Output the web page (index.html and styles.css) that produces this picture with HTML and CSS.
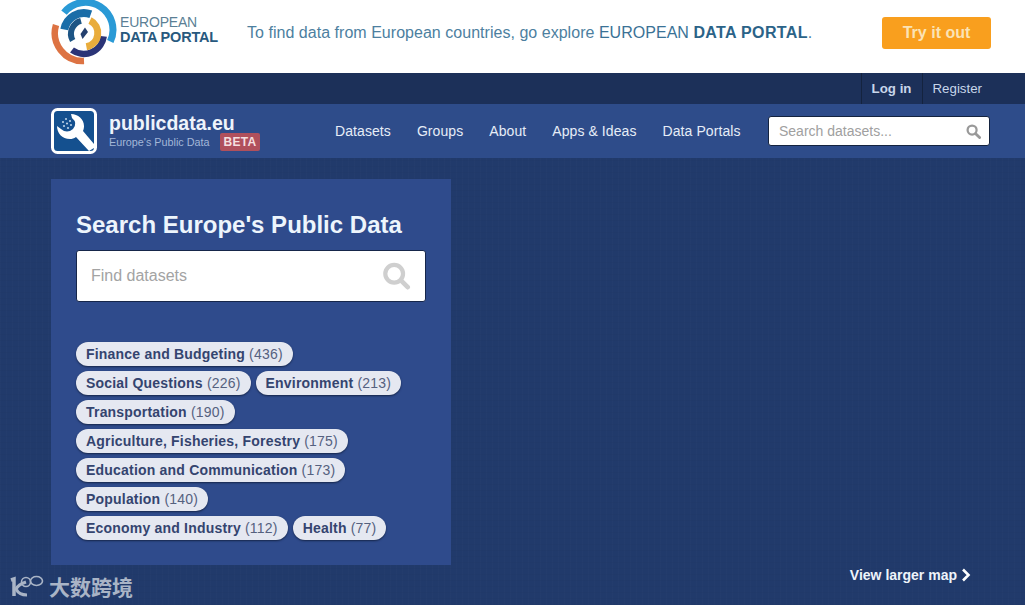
FILE: index.html
```html
<!DOCTYPE html>
<html lang="en">
<head>
    <meta charset="UTF-8">
    <meta name="viewport" content="width=device-width, initial-scale=1.0">
    <title>publicdata.eu</title>
    <link rel="stylesheet" href="styles.css">
</head>
<body>
    <!-- Promo banner -->
    <div class="promo">
        <a class="promo-logo" href="#">
            <svg class="promo-mark" viewBox="0 0 66 66" width="66" height="66" fill="none">
                <path d="M13 12.6A27.5 27.5 0 0 1 59.3 41.6" stroke="#2a9ad6" stroke-width="7"/>
                <path d="M5 25A28 28 0 0 0 33 61" stroke="#dd7343" stroke-width="6.5"/>
                <path d="M21 50A20 20 0 0 0 52.7 36.3" stroke="#2b3477" stroke-width="6.5"/>
                <path d="M39 20.5A14 14 0 0 1 35.4 46.8" stroke="#e9ac3c" stroke-width="7"/>
                <path d="M13.3 29.5A20 20 0 0 1 39.8 14.2" stroke="#1a6da8" stroke-width="8"/>
                <path d="M21.7 40.5A13.5 13.5 0 0 1 30 20.8" stroke="#1d5585" stroke-width="6"/>
                <path d="M34 27.5L37 32L31.5 39L29.5 34Z" fill="#24406f"/>
            </svg>
            <span class="promo-name">EUROPEAN<strong>DATA PORTAL</strong></span>
        </a>
        <p class="promo-text">To find data from European countries, go explore <span class="promo-accent">EUROPEAN <strong>DATA PORTAL</strong></span>.</p>
        <a class="promo-btn" href="#">Try it out</a>
    </div>

    <!-- Account links -->
    <div class="account">
        <a class="account-link account-login" href="#">Log in</a>
        <a class="account-link" href="#">Register</a>
    </div>

    <!-- Main nav -->
    <header class="masthead">
        <a class="brand" href="#">
            <svg class="brand-icon" viewBox="0 0 46 46" width="46" height="46">
                <rect x="1.5" y="1.5" width="43" height="43" rx="5" fill="#14508f" stroke="#fff" stroke-width="3"/>
                <path d="M20 6C27 6 33 11 33 18C33 20 32.7 21 32 23L43 36V40L38 43L25 29C23 30.5 21 31 19 31C11 31 6 25 6 18L10 21Q16 26 22 21Q27 15 21 10Z" fill="#fff"/>
                <g fill="#b9d0e6">
                    <circle cx="15" cy="11" r="1.1"/>
                    <circle cx="19" cy="13" r="1.1"/>
                    <circle cx="12" cy="14" r="1.1"/>
                    <circle cx="16" cy="15.5" r="1.1"/>
                    <circle cx="20" cy="17" r="1.1"/>
                    <circle cx="13" cy="18" r="1.1"/>
                    <circle cx="17" cy="20" r="1.1"/>
                </g>
            </svg>
            <span class="brand-text">
                <span class="brand-name">publicdata.eu</span>
                <span class="brand-sub">Europe's Public Data <span class="badge">BETA</span></span>
            </span>
        </a>
        <nav class="nav">
            <a href="#">Datasets</a>
            <a href="#">Groups</a>
            <a href="#">About</a>
            <a href="#">Apps &amp; Ideas</a>
            <a href="#">Data Portals</a>
        </nav>
        <form class="nav-search">
            <input type="text" placeholder="Search datasets...">
            <svg viewBox="0 0 16 16" width="15" height="15" fill="none" stroke="#999">
                <circle cx="6.5" cy="6.5" r="4.8" stroke-width="2.4"/>
                <path d="M10.3 10.3L14.5 14.5" stroke-width="3" stroke-linecap="round"/>
            </svg>
        </form>
    </header>

    <main class="content">
        <section class="panel">
            <h1>Search Europe's Public Data</h1>
            <form class="big-search">
                <input type="text" placeholder="Find datasets">
                <svg viewBox="0 0 30 30" width="29" height="28" fill="none" stroke="#cfcfcf">
                    <circle cx="12.5" cy="12.5" r="9.5" stroke-width="4.5"/>
                    <path d="M20 20L27 27" stroke-width="5" stroke-linecap="round"/>
                </svg>
            </form>
            <ul class="tags">
                <li><a href="#">Finance and Budgeting</a> (436)</li>
                <li><a href="#">Social Questions</a> (226)</li>
                <li><a href="#">Environment</a> (213)</li>
                <li><a href="#">Transportation</a> (190)</li>
                <li><a href="#">Agriculture, Fisheries, Forestry</a> (175)</li>
                <li><a href="#">Education and Communication</a> (173)</li>
                <li><a href="#">Population</a> (140)</li>
                <li><a href="#">Economy and Industry</a> (112)</li>
                <li><a href="#">Health</a> (77)</li>
            </ul>
        </section>
        <div class="map">
            <a class="map-link" href="#">View larger map
                <svg viewBox="0 0 10 14" width="10" height="14" fill="none" stroke="#fff" stroke-width="2.6">
                    <path d="M2 1.5L7.5 7L2 12.5"/>
                </svg>
            </a>
        </div>
    </main>

    <!-- Watermark over the page -->
    <div class="watermark">
        <svg viewBox="0 0 38 24" width="38" height="24" fill="none" stroke="#a9b4c6">
            <path d="M2 6L5 5V22" stroke-width="3.5"/>
            <path d="M17 8C11 10 8 13 7 15C9 19 13 21 18 21" stroke-width="3"/>
            <circle cx="17" cy="8" r="4.5" stroke-width="1.6"/>
            <ellipse cx="27.5" cy="7" rx="6" ry="4.5" stroke-width="1.6"/>
        </svg>
        <span>大数跨境</span>
    </div>
</body>
</html>
```

FILE: styles.css
```css
/* Basic Styling */
* {
    box-sizing: border-box;
}

html, body {
    height: 100%;
}

body {
    position: relative;
    margin: 0;
    overflow: hidden;
    font-family: "Liberation Sans", Arial, sans-serif;
    color: #fff;
    background-color: #213a6b;
    background-image:
        repeating-linear-gradient(90deg, rgba(255, 255, 255, 0.012) 0 1px, transparent 1px 6px),
        repeating-linear-gradient(0deg, rgba(0, 0, 0, 0.02) 0 1px, transparent 1px 6px);
}

a {
    color: inherit;
    text-decoration: none;
}

/* Promo banner */
.promo {
    display: flex;
    align-items: center;
    height: 73px;
    padding: 0 34px 7px 51px;
    background-color: #fff;
}

.promo-logo {
    display: flex;
    align-items: center;
    width: 196px;
    color: #5b7f95;
}

.promo-mark {
    flex: none;
    margin-right: 3px;
}

.promo-name {
    display: block;
    margin-bottom: 7px;
    font-size: 14px;
    line-height: 15px;
    letter-spacing: -0.2px;
}

.promo-name strong {
    display: block;
    font-size: 14.5px;
    color: #28597e;
}

.promo-text {
    flex: 1;
    margin: 0;
    font-size: 16px;
    letter-spacing: 0.03px;
    color: #4d7f9f;
}

.promo-accent {
    color: #3a7296;
}

.promo-accent strong {
    letter-spacing: 0.35px;
    color: #2b6388;
}

.promo-btn {
    width: 109px;
    height: 32px;
    border-radius: 3px;
    background-color: #f99f1e;
    color: #fbe3b5;
    font-size: 16px;
    font-weight: bold;
    line-height: 32px;
    text-align: center;
}

/* Account links */
.account {
    display: flex;
    justify-content: flex-end;
    height: 31px;
    padding-right: 32px;
    background-color: #1c3059;
}

.account-link {
    padding: 0 11px 0 9px;
    border-left: 1px solid #14233f;
    color: #c8d6ea;
    font-size: 13.3px;
    line-height: 31px;
}

.account-login {
    padding-left: 10px;
    font-weight: bold;
}

/* Main nav */
.masthead {
    display: flex;
    align-items: center;
    height: 54px;
    padding: 0 35px 0 51px;
    background-color: #2e4c8a;
}

.brand {
    display: flex;
    align-items: center;
    width: 284px;
}

.brand-icon {
    flex: none;
    margin-right: 12px;
}

.brand-text {
    display: block;
    padding-top: 2px;
}

.brand-name {
    display: block;
    font-size: 19.5px;
    font-weight: bold;
    line-height: 20px;
    color: #eef4fb;
}

.brand-sub {
    display: block;
    font-size: 10.8px;
    line-height: 18px;
    color: #a3b7d8;
}

.badge {
    display: inline-block;
    margin-left: 7px;
    padding: 0 4px;
    border-radius: 2px;
    background-color: #b0505c;
    color: #f5dfe0;
    font-size: 12px;
    font-weight: bold;
    line-height: 18px;
    letter-spacing: 0.3px;
}

.nav {
    display: flex;
    flex: 1;
    gap: 26px;
    font-size: 14px;
    letter-spacing: 0.08px;
    color: #e6edf7;
}

.nav-search {
    display: flex;
    align-items: center;
    width: 222px;
    height: 30px;
    padding: 0 8px 0 10px;
    border: 1px solid #14233f;
    border-radius: 3px;
    background-color: #fff;
}

.nav-search input {
    flex: 1;
    min-width: 0;
    padding: 0;
    border: none;
    outline: none;
    font-family: inherit;
    font-size: 14px;
}

.nav-search input::placeholder {
    color: #a0a0a0;
}

/* Content */
.content {
    display: flex;
    height: 447px;
    padding: 21px 0 0 51px;
}

.panel {
    width: 400px;
    height: 386px;
    padding: 30px 25px 0;
    background-color: #2f4b8c;
}

.panel h1 {
    margin: 0 0 9px;
    font-size: 24px;
    line-height: 32px;
    color: #edf5fc;
}

.big-search {
    display: flex;
    align-items: center;
    height: 52px;
    padding: 0 14px 0 14px;
    border: 1px solid #16264a;
    border-radius: 3px;
    background-color: #fff;
}

.big-search input {
    flex: 1;
    min-width: 0;
    padding: 0;
    border: none;
    outline: none;
    font-family: inherit;
    font-size: 16px;
}

.big-search input::placeholder {
    color: #a3a3a3;
}

.tags {
    display: flex;
    flex-wrap: wrap;
    gap: 5px;
    max-width: 340px;
    margin: 40px 0 0;
    padding: 0;
    list-style: none;
}

.tags li {
    height: 24px;
    padding: 0 10px;
    border-radius: 12px;
    background-color: #e5e8f1;
    box-shadow: 0 1px 2px #16264a;
    color: #55617f;
    font-size: 14px;
    line-height: 24px;
    letter-spacing: 0.2px;
}

.tags li a {
    color: #34446f;
    font-weight: bold;
}

.map {
    display: flex;
    flex: 1;
    justify-content: flex-end;
    align-items: flex-end;
    padding: 0 54px 22px 0;
}

.map-link {
    display: flex;
    align-items: center;
    gap: 4px;
    font-size: 14px;
    font-weight: bold;
    color: #eef4fb;
}

/* Watermark */
.watermark {
    position: absolute;
    left: 9px;
    bottom: 7px;
    display: flex;
    align-items: center;
    gap: 2px;
    color: #a9b4c6;
    font-family: "Noto Sans CJK SC", sans-serif;
    font-size: 21px;
    font-weight: bold;
    line-height: 24px;
}
```
